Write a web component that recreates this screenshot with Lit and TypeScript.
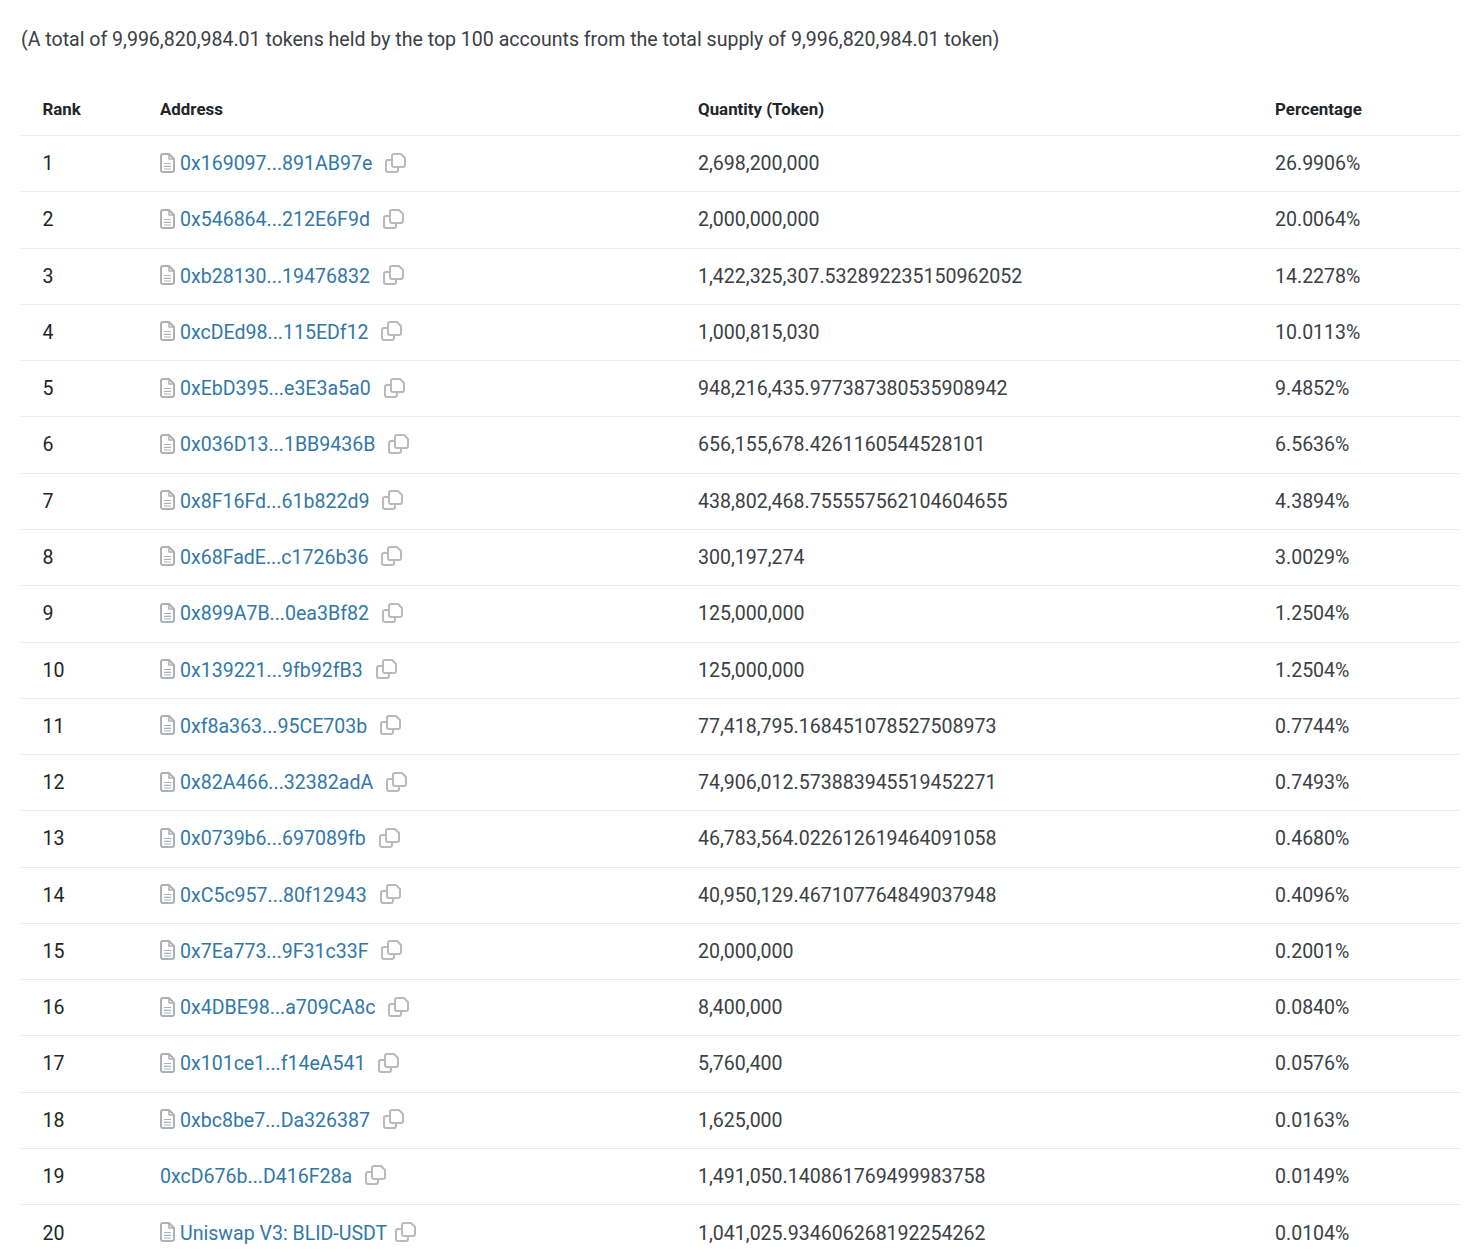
import { LitElement, html, css, svg } from "lit";
import { customElement } from "lit/decorators.js";

const rows: [string, boolean, string, string][] = [
  ["0x169097...891AB97e", true, "2,698,200,000", "26.9906%"],
  ["0x546864...212E6F9d", true, "2,000,000,000", "20.0064%"],
  ["0xb28130...19476832", true, "1,422,325,307.532892235150962052", "14.2278%"],
  ["0xcDEd98...115EDf12", true, "1,000,815,030", "10.0113%"],
  ["0xEbD395...e3E3a5a0", true, "948,216,435.977387380535908942", "9.4852%"],
  ["0x036D13...1BB9436B", true, "656,155,678.4261160544528101", "6.5636%"],
  ["0x8F16Fd...61b822d9", true, "438,802,468.755557562104604655", "4.3894%"],
  ["0x68FadE...c1726b36", true, "300,197,274", "3.0029%"],
  ["0x899A7B...0ea3Bf82", true, "125,000,000", "1.2504%"],
  ["0x139221...9fb92fB3", true, "125,000,000", "1.2504%"],
  ["0xf8a363...95CE703b", true, "77,418,795.168451078527508973", "0.7744%"],
  ["0x82A466...32382adA", true, "74,906,012.573883945519452271", "0.7493%"],
  ["0x0739b6...697089fb", true, "46,783,564.022612619464091058", "0.4680%"],
  ["0xC5c957...80f12943", true, "40,950,129.467107764849037948", "0.4096%"],
  ["0x7Ea773...9F31c33F", true, "20,000,000", "0.2001%"],
  ["0x4DBE98...a709CA8c", true, "8,400,000", "0.0840%"],
  ["0x101ce1...f14eA541", true, "5,760,400", "0.0576%"],
  ["0xbc8be7...Da326387", true, "1,625,000", "0.0163%"],
  ["0xcD676b...D416F28a", false, "1,491,050.140861769499983758", "0.0149%"],
  ["Uniswap V3: BLID-USDT", true, "1,041,025.934606268192254262", "0.0104%"],
];

const fileIcon = svg`<svg class="file" viewBox="0 0 15 20" width="15" height="20" fill="none" stroke="#aeb1b4" stroke-width="2" stroke-linejoin="round"><path d="M3 1h6L14 6v11a2 2 0 0 1-2 2H3a2 2 0 0 1-2-2V3a2 2 0 0 1 2-2Z"/><path d="M9 1.500V6h4.500" stroke-width="1.600"/><path d="M4 10.500h7M4 13.300h7M4 16h7" stroke-width="1.200"/></svg>`;

const copyIcon = svg`<svg class="copy" viewBox="0 0 21 20" width="21" height="20" fill="none" stroke="#b8babd" stroke-width="2" stroke-linejoin="round"><path d="M7 12V3a2 2 0 0 1 2-2h7l4 4v7a2 2 0 0 1-2 2H9a2 2 0 0 1-2-2Z"/><path d="M7 7H3a2 2 0 0 0-2 2v8a2 2 0 0 0 2 2h8a2 2 0 0 0 2-2v-3"/></svg>`;

@customElement("app-root")
export class AppRoot extends LitElement {
  static styles = css`
    :host {
      display: block;
      background: #fff;
      font-family: Roboto, "Liberation Sans", sans-serif;
      font-size: 19.560px;
      color: #212529;
      height: 1259px;
      overflow: hidden;
    }
    .wrap {
      padding: 0 10px 0 21px;
    }
    .summary {
      height: 79px;
      line-height: 79px;
      color: #3b4045;
      white-space: nowrap;
    }
    .row {
      display: grid;
      grid-template-columns: 139px 538px 577px 1fr;
      height: 56.270px;
      align-items: center;
      border-bottom: 1px solid #e9ecef;
      box-sizing: border-box;
      white-space: nowrap;
    }
    .row > :first-child {
      padding-left: 21.500px;
    }
    .head {
      height: 57.165px;
      font-size: 16.900px;
      font-weight: 700;
      color: #212529;
      padding-top: 3px;
    }
    .body-row {
      color: #3b4045;
      padding-bottom: 0.350px;
    }
    .rank {
      color: #212529;
    }
    .addr {
      display: flex;
      align-items: center;
    }
    .file {
      margin: -2px 5px 0 0;
      flex: none;
    }
    a {
      color: #3178a8;
      text-decoration: none;
    }
    .copy {
      margin: -2px 0 0 12.800px;
      flex: none;
    }
    .last {
      border-bottom: none;
    }
    .last .copy {
      margin-left: 8px;
    }
  `;

  render() {
    return html`<div class="wrap">
      <div class="summary">(A total of 9,996,820,984.01 tokens held by the top 100 accounts from the total supply of 9,996,820,984.01 token)</div>
      <div class="row head">
        <span>Rank</span><span>Address</span><span>Quantity (Token)</span><span>Percentage</span>
      </div>
      ${rows.map(
        (r, i) => html`<div class="row body-row ${i === rows.length - 1 ? "last" : ""}">
          <span class="rank">${i + 1}</span>
          <span class="addr">${r[1] ? fileIcon : ""}<a href="#">${r[0]}</a>${copyIcon}</span>
          <span>${r[2]}</span>
          <span>${r[3]}</span>
        </div>`
      )}
    </div>`;
  }
}
